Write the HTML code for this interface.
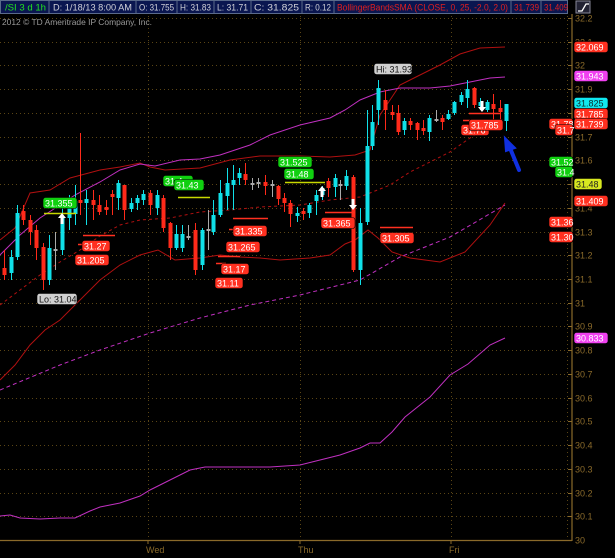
<!DOCTYPE html>
<html><head><meta charset="utf-8"><style>
html,body{margin:0;padding:0;background:#000;width:615px;height:558px;overflow:hidden}
svg{display:block}
text{font-family:"Liberation Sans",sans-serif}
</style></head><body>
<svg id="s" width="615" height="558" viewBox="0 0 615 558" xmlns="http://www.w3.org/2000/svg">
<rect width="615" height="558" fill="#000"/>
<g id="grid"></g>
<!-- header -->
<rect x="0" y="0" width="568" height="14" fill="#0a1650"/>
<g stroke="#5a6a8a" stroke-width="1" fill="none">
<rect x="0.5" y="0.5" width="567" height="13"/>
<line x1="49" y1="0" x2="49" y2="14"/><line x1="136" y1="0" x2="136" y2="14"/><line x1="177" y1="0" x2="177" y2="14"/>
<line x1="214" y1="0" x2="214" y2="14"/><line x1="251" y1="0" x2="251" y2="14"/><line x1="302" y1="0" x2="302" y2="14"/>
<line x1="334" y1="0" x2="334" y2="14"/><line x1="511" y1="0" x2="511" y2="14"/><line x1="541" y1="0" x2="541" y2="14"/>
</g>
<g font-size="9" fill="#d0d0d8" lengthAdjust="spacingAndGlyphs">
<text x="5" y="10.5" fill="#22e022" textLength="41" lengthAdjust="spacingAndGlyphs">/SI 3 d 1h</text>
<text x="53" y="10.5" textLength="79" lengthAdjust="spacingAndGlyphs">D: 1/18/13 8:00 AM</text>
<text x="139" y="10.5" textLength="35" lengthAdjust="spacingAndGlyphs">O: 31.755</text>
<text x="180" y="10.5" textLength="31" lengthAdjust="spacingAndGlyphs">H: 31.83</text>
<text x="217" y="10.5" textLength="31" lengthAdjust="spacingAndGlyphs">L: 31.71</text>
<text x="254" y="10.5" textLength="45" lengthAdjust="spacingAndGlyphs">C: 31.825</text>
<text x="305" y="10.5" textLength="26" lengthAdjust="spacingAndGlyphs">R: 0.12</text>
<text x="337" y="10.5" fill="#e02020" textLength="171" lengthAdjust="spacingAndGlyphs">BollingerBandsSMA (CLOSE, 0, 25, -2.0, 2.0)</text>
<text x="514" y="10.5" fill="#e02020" textLength="25" lengthAdjust="spacingAndGlyphs">31.739</text>
<text x="544" y="10.5" fill="#e02020" textLength="24" lengthAdjust="spacingAndGlyphs">31.409</text>
</g>
<rect x="576" y="1" width="14" height="12" fill="#223" stroke="#889" stroke-width="1"/>
<path d="M578 11 L582 11 L586 4 L589 4" stroke="#fff" stroke-width="1.3" fill="none"/>
<text x="2" y="25" font-size="8.5" fill="#9a9a9a" textLength="150" lengthAdjust="spacingAndGlyphs">2012 © TD Ameritrade IP Company, Inc.</text>
<!-- axes -->
<line x1="572" y1="14" x2="572" y2="541" stroke="#8a6a2a" stroke-width="1.2"/>
<line x1="0" y1="540.5" x2="572" y2="540.5" stroke="#8a6a2a" stroke-width="1.2"/>
<g stroke="#8a6a2a"><line x1="148" y1="540" x2="148" y2="544"/><line x1="300" y1="540" x2="300" y2="544"/><line x1="451" y1="540" x2="451" y2="544"/></g>
<g font-size="9" fill="#8a6a2a"><text x="146" y="553">Wed</text><text x="298" y="553">Thu</text><text x="449" y="553">Fri</text></g>
<g id="axlab" font-size="9" fill="#8a6a2a"></g>
<g id="lines" fill="none"></g>
<g id="candles"></g>
<g id="marks"></g>
<!-- blue arrow -->
<path d="M519 170 L510 148" stroke="#1030e0" stroke-width="4" stroke-linecap="round"/>
<path d="M505 138 L515 148 L506 151 Z" fill="#1030e0" stroke="#1030e0" stroke-width="2"/>
<g id="badges" font-size="9"></g>
</svg>
<script>
var NS="http://www.w3.org/2000/svg";
function el(p,t,a,txt){var e=document.createElementNS(NS,t);for(var k in a)e.setAttribute(k,a[k]);if(txt!=null)e.textContent=txt;document.getElementById(p).appendChild(e);return e;}
function Y(p){return 18+(32.2-p)*237.3;}
for(var i=0;i<=22;i++){var p=32.2-i*0.1,y=Math.round(Y(p))+0.5;
 if(i<22)el("grid","line",{x1:0,y1:y,x2:568,y2:y,stroke:"#5a4515","stroke-dasharray":"1,3"});
 el("grid","line",{x1:568,y1:y,x2:572,y2:y,stroke:"#8a6a2a"});
 var lab=(Math.round(p*10)/10).toString();
 el("axlab","text",{x:575,y:y+3},lab);}
[148,300,451,567].forEach(function(x){el("grid","line",{x1:x+0.5,y1:16,x2:x+0.5,y2:540,stroke:"#5a4515","stroke-dasharray":"1,3"});});
function pl(pts,col,w,dash){var d="M"+pts.map(function(q){return q.join(" ")}).join(" L");var a={d:d,stroke:col,"stroke-width":w||1};if(dash)a["stroke-dasharray"]=dash;el("lines","path",a);}
pl([[0,240],[15,228],[30,193],[50,190],[70,178],[100,170],[120,167],[140,163],[150,167],[165,170],[200,168],[230,160],[260,156],[300,156],[330,157],[355,155],[370,150],[380,115],[390,100],[400,85],[420,75],[440,65],[460,54],[480,48],[505,47]],"#b01010",1);
pl([[0,380],[15,365],[30,345],[45,330],[60,320],[80,300],[100,280],[120,265],[140,255],[158,250],[175,260],[200,258],[220,255],[240,257],[260,258],[280,260],[310,258],[330,255],[345,244],[355,240],[368,230],[378,238],[392,252],[410,258],[440,262],[465,252],[490,225],[505,203]],"#b01010",1);
pl([[0,305],[20,290],[40,275],[60,262],[80,250],[100,236],[120,225],[140,220],[170,218],[200,212],[230,210],[260,207],[300,205],[330,200],[360,197],[390,185],[410,172],[430,162],[450,152],[470,138],[490,126],[505,118]],"#b01010",1,"3,3");
pl([[0,255],[20,235],[40,218],[60,205],[75,195],[100,182],[120,170],[140,164],[155,166],[180,160],[200,159],[220,155],[250,145],[270,135],[300,125],[330,118],[345,110],[360,100],[380,92],[400,88],[430,88],[450,86],[470,82],[490,78],[505,77]],"#c030c0",1);
pl([[0,390],[60,365],[100,350],[150,333],[200,318],[250,305],[300,295],[340,285],[360,280],[400,257],[450,237],[505,205]],"#c030c0",1,"4,3");
pl([[0,516],[10,515],[20,518],[40,519],[60,518],[75,518],[90,511],[100,507],[120,503],[140,496],[150,490],[170,480],[190,470],[205,467],[220,467],[270,467],[300,465],[320,460],[340,455],[360,448],[370,443],[380,443],[392,432],[405,417],[430,397],[450,375],[468,364],[490,345],[505,338]],"#c030c0",1);
var C=[[4,268,275,250,280],[11,273,257,250,280],[17,257,213,205,260],[23,211,220,205,225],[30,220,232,215,245],[36,230,248,225,260],[43,247,280,243,290],[49,280,248,235,285],[55,250,249,232,270],[62,250,218,200,255],[69,218,205,195,230],[75,214,201,185,225],[80,200,203,133,215],[86,203,199,190,225],[93,200,205,190,220],[99,205,212,195,215],[106,207,210,200,215],[112,194,197,190,215],[118,198,183,180,210],[124,185,210,185,220],[131,209,203,198,212],[137,203,198,195,210],[143,200,194,190,205],[150,193,205,190,215],[157,208,195,190,215],[163,198,228,195,232],[170,223,248,222,260],[176,248,234,225,250],[182,248,234,225,252],[188,236,238,225,240],[195,230,270,223,275],[202,265,230,228,270],[208,229,231,210,250],[213,232,215,200,235],[220,215,193,180,217],[227,196,183,168,210],[233,185,180,165,210],[239,178,173,168,185],[245,174,180,163,185],[252,183,185,178,190],[258,184,182,178,188],[265,182,186,175,195],[272,186,184,180,197],[278,186,199,185,205],[284,198,203,193,212],[290,203,214,200,227],[297,216,213,207,222],[303,211,214,208,220],[309,213,205,203,218],[316,201,195,190,215],[322,195,188,186,200],[328,181,188,178,197],[335,187,178,174,197],[340,184,186,180,200],[346,186,176,170,190],[353,177,270,175,272],[360,270,223,208,285],[367,222,146,110,225],[372,146,122,105,150],[378,110,88,80,125],[385,100,110,90,130],[392,112,115,105,120],[398,113,132,105,135],[404,130,121,118,135],[410,121,125,118,130],[417,123,130,122,140],[423,128,131,120,135],[429,132,118,115,141],[436,119,120,110,122],[442,118,122,115,130],[448,119,114,110,120],[454,113,102,101,115],[461,102,95,92,105],[467,98,89,80,108],[474,88,105,87,108],[480,106,102,98,110],[487,110,102,100,112],[493,104,109,94,120],[500,108,112,100,120],[506,121,104,104,131]];
C.forEach(function(c){var up=c[2]<c[1];var col=Math.abs(c[2]-c[1])<3?"#aaaaaa":(up?"#10e0e8":"#ff2a1a");
 el("candles","line",{x1:c[0]+0.5,y1:c[3],x2:c[0]+0.5,y2:c[4],stroke:col,"stroke-width":1});
 var t=Math.min(c[1],c[2]),h=Math.max(Math.abs(c[2]-c[1]),2);el("candles","rect",{x:c[0]-1.5,y:t,width:4,height:h,fill:col});});
[[44,213,76,"#c8d800"],[178,197,210,"#c8d800"],[285,182,325,"#c8d800"],[83,235,115,"#ff3020"],[78,244,93,"#ff3020"],[233,218,268,"#ff3020"],[229,229,242,"#ff3020"],[218,256,240,"#ff3020"],[216,263,226,"#ff3020"],[325,212,355,"#ff3020"],[380,227,413,"#ff3020"],[469,113,500,"#ff3020"],[463,120,475,"#ff3020"]].forEach(function(l){el("marks","line",{x1:l[0],y1:l[1]+0.5,x2:l[2],y2:l[1]+0.5,stroke:l[3],"stroke-width":1.5});});
function arr(x,y,up){var d=up?"M"+x+" "+y+" l-4 5 h2.5 v6 h3 v-6 h2.5 z":"M"+x+" "+y+" l-4 -5 h2.5 v-6 h3 v6 h2.5 z";el("marks","path",{d:d,fill:"#fff"});}
arr(62,213,true);arr(322,186,true);arr(353,210,false);arr(482,112,false);
function bd(x,y,w,t,bg,fg){el("badges","rect",{x:x,y:y-5.5,width:w,height:11,rx:2.5,fill:bg,stroke:"#000","stroke-width":0.6});el("badges","text",{x:x+2,y:y+3.3,fill:fg||"#fff"},t);}
bd(43,203,34,"31.355","#10d010");bd(163,181,30,"31.4","#10d010");bd(174,185,30,"31.43","#10d010");
bd(278,162,34,"31.525","#10d010");bd(284,174,30,"31.48","#10d010");
bd(82,246,28,"31.27","#ff3020");bd(75,260,34,"31.205","#ff3020");bd(233,231,34,"31.335","#ff3020");
bd(226,247,34,"31.265","#ff3020");bd(221,269,28,"31.17","#ff3020");bd(215,283,28,"31.11","#ff3020");
bd(321,223,34,"31.365","#ff3020");bd(380,238,34,"31.305","#ff3020");bd(461,130,28,"31.76","#ff3020");bd(469,125,34,"31.785","#ff3020");
bd(37,299,40,"Lo: 31.04","#d0d0d0","#111");bd(374,69,38,"Hi: 31.93","#d0d0d0","#111");
bd(574,47,34,"32.069","#ff3020");bd(574,76,34,"31.943","#f040f0");bd(574,103,34,"31.825","#10e8f0","#0a2a2a");
bd(574,114,34,"31.785","#ff3020");bd(574,124,34,"31.739","#ff3020");bd(574,184,28,"31.48","#d8e820","#222");
bd(574,201,34,"31.409","#ff3020");bd(574,338,34,"30.833","#f040f0");
bd(549,124,24,"31.78","#ff3020");bd(555,130,18,"31.7","#ff3020");bd(549,162,24,"31.52","#10d010");bd(555,172,18,"31.4","#10d010");
bd(549,222,24,"31.36","#ff3020");bd(549,237,24,"31.30","#ff3020");
</script>
</body></html>
